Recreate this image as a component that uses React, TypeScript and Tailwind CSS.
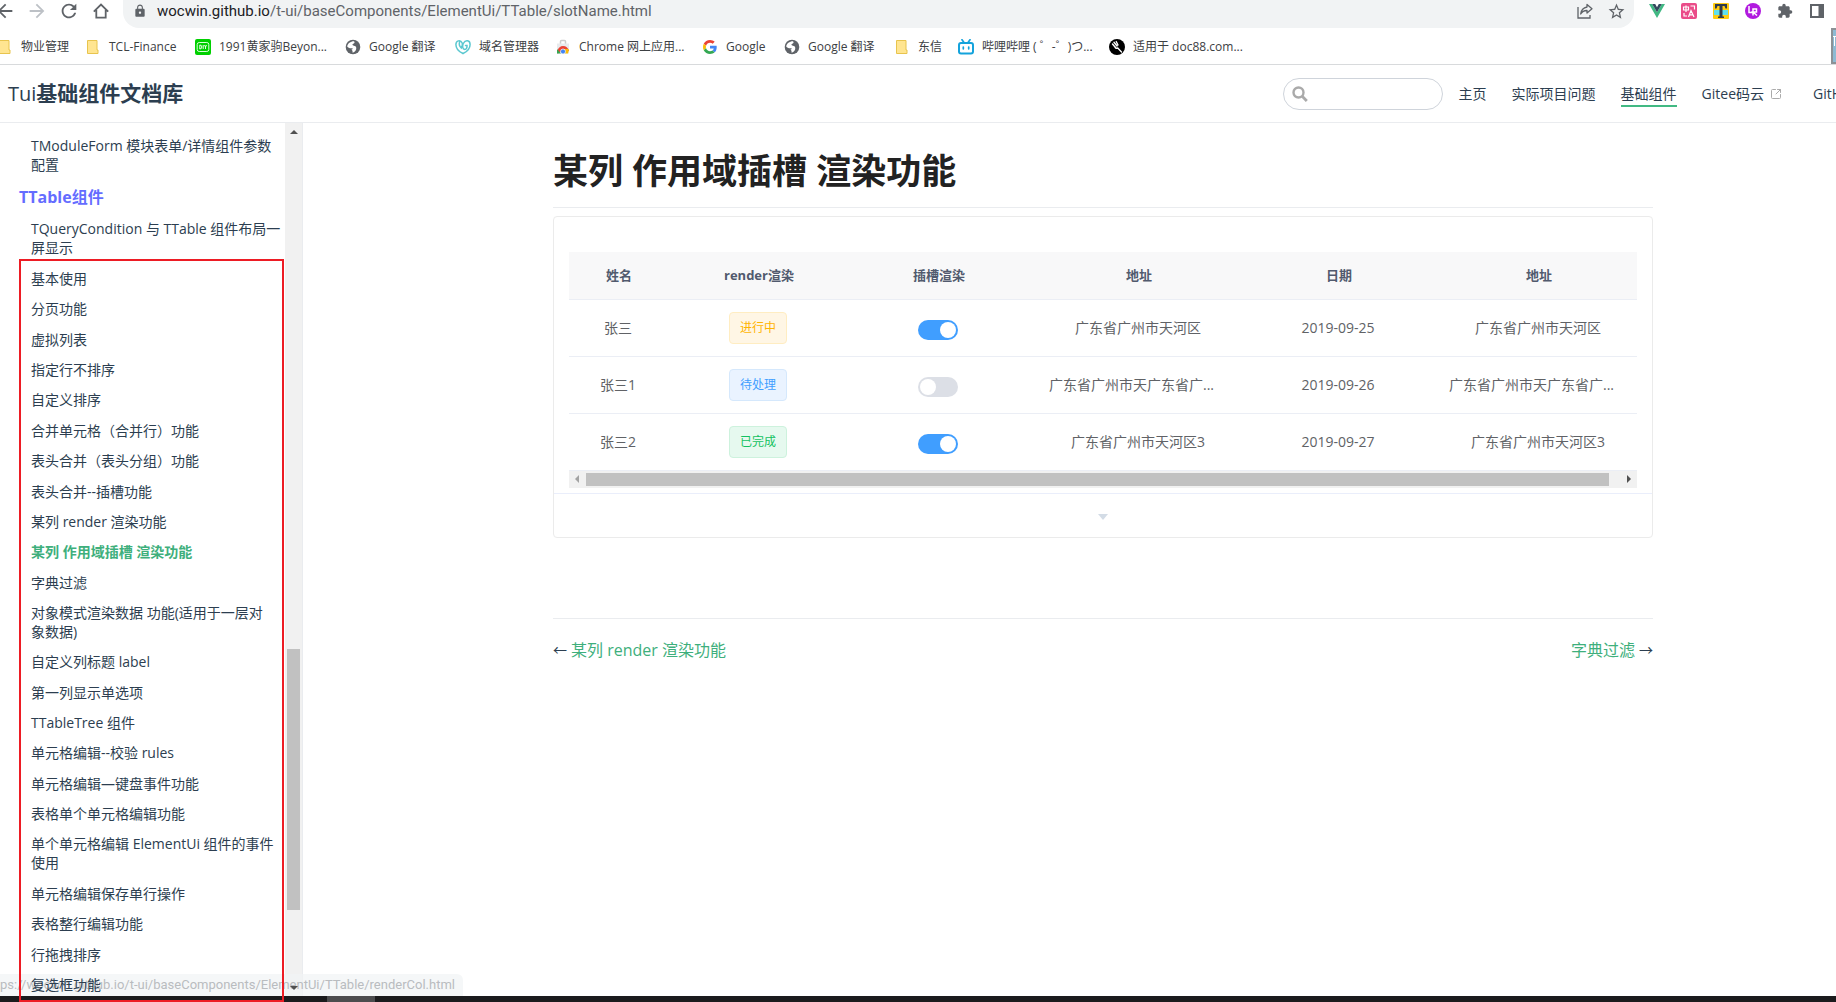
import React from "react";
import { SquareArrowOutUpRight } from "lucide-react";
import { MdArrowBack, MdArrowForward, MdRefresh, MdStarBorder, MdExtension, MdLock } from "react-icons/md";

const Folder = () => (
  <svg viewBox="0 0 16 16" className="h-4 w-4 shrink-0">
    <path d="M2.5 1.5h9.500v9.500h1v3.500h-10.500z" fill="#ffe591" stroke="#e8c44d" />
  </svg>
);
const Globe = () => (
  <svg viewBox="0 0 16 16" className="h-4 w-4 shrink-0">
    <circle cx="8" cy="8" r="7.300" fill="#5f6368" />
    <path d="M9 2.200C10 3 9.600 4.300 8.300 4.700c-1.200.4-1.200 1.400-.1 1.700 2.600.4 3.400 1.400 3 3.600-.5 2.200-2 3.500-3.600 3.700.1-1.500-.2-2.500-1.400-3.200 1.100 0 1.600-.5 1.400-1.300C5.400 9.700 3.200 9 2.200 7.600 2.500 4.500 5.500 2.200 9 2.200z" fill="#fff" />
  </svg>
);
const Movie = () => (
  <svg viewBox="0 0 16 16" className="h-4 w-4 shrink-0">
    <rect width="16" height="16" rx="2" fill="#00d000" />
    <rect x="2.200" y="3.500" width="11.600" height="9" rx="2" fill="none" stroke="#d8ffd8" />
    <path d="M4.800 6v4q2 0 2-2t-2-2M8.200 6v4M9.500 6l1 2 1-2M10.500 8v2" fill="none" stroke="#fff" strokeWidth=".9" />
  </svg>
);
const Domain = () => (
  <svg viewBox="0 0 16 16" className="h-4 w-4 shrink-0" fill="none" stroke="#5cc8d0" strokeWidth="1.500" strokeLinecap="round">
    <path d="M8 14.500C3.500 12.500 .9 9 .9 5.500.9 1.500 5.500.3 7.200 4 7.800 5.800 7.300 7.500 6.300 9 4.600 7.500 3.800 5.500 4.600 3" />
    <path d="M8 14.500c4.500-2 7.100-5.500 7.100-9C15.100 1 10.500.3 8.300 4.500 7 7 7.500 10.500 9.800 10.500c1.700 0 2.400-2 2.200-4h-1.500" />
  </svg>
);
const Store = () => (
  <svg viewBox="0 0 16 16" className="h-4 w-4 shrink-0">
    <path d="M5.500 5V2.500q0-1 1-1h3q1 0 1 1V5" fill="none" stroke="#ccc" strokeWidth="1.500" />
    <path d="M2 4.500h12v10H2z" fill="#e8eaed" />
    <path d="M2.500 14.500a5.500 5.500 0 0 1 0-3Q4 7 8 7q4.500 0 6 5H8z" fill="#ea4335" />
    <path d="M2 10l4 4.500H2z" fill="#34a853" />
    <path d="M8 10h5.500q.5 2-.5 4.500H8z" fill="#fbbc04" />
    <circle cx="8" cy="12.500" r="2.500" fill="#4285f4" stroke="#fff" strokeWidth=".7" />
  </svg>
);
const GoogleG = () => (
  <svg viewBox="0 0 48 48" className="h-4 w-4 shrink-0 p-px">
    <path fill="#EA4335" d="M24 9.500c3.540 0 6.710 1.220 9.210 3.600l6.850-6.850C35.900 2.380 30.470 0 24 0 14.620 0 6.510 5.380 2.560 13.220l7.980 6.190C12.430 13.720 17.740 9.500 24 9.500z" />
    <path fill="#4285F4" d="M46.980 24.550c0-1.570-.15-3.090-.38-4.550H24v9.020h12.940c-.58 2.960-2.260 5.480-4.780 7.180l7.730 6c4.510-4.180 7.090-10.360 7.090-17.650z" />
    <path fill="#FBBC05" d="M10.530 28.590c-.48-1.450-.76-2.990-.76-4.590s.27-3.140.76-4.590l-7.980-6.190C.92 16.460 0 20.120 0 24c0 3.880.92 7.540 2.560 10.780l7.970-6.190z" />
    <path fill="#34A853" d="M24 48c6.480 0 11.930-2.130 15.890-5.810l-7.730-6c-2.150 1.450-4.920 2.300-8.160 2.300-6.260 0-11.570-4.220-13.470-9.910l-7.980 6.190C6.510 42.620 14.620 48 24 48z" />
  </svg>
);
const Bili = () => (
  <svg viewBox="0 0 16 16" className="h-4 w-4 shrink-0" fill="none" stroke="#14a3dc" strokeLinecap="round">
    <rect x="1" y="4" width="14" height="10.500" rx="2" strokeWidth="2" />
    <path d="M4 .8l2 2.700M12 .8l-2 2.700M5.300 8v1.800M10.700 8v1.800" strokeWidth="1.700" />
  </svg>
);
const Doc = () => (
  <svg viewBox="0 0 16 16" className="h-4 w-4 shrink-0">
    <circle cx="8" cy="8" r="8" fill="#000" />
    <path d="M3.500 5l3 3.500M5 3.200l3 3.800M7.200 2.500L9 6M5.800 7.500q.5 2.500 3 1.500l3.700 4" fill="none" stroke="#fff" strokeWidth="1.400" strokeLinecap="round" />
  </svg>
);

const bookmarks = [
  { label: "物业管理", icon: <Folder />, w: "w-[88px]" },
  { label: "TCL-Finance", icon: <Folder />, w: "w-[110px]" },
  { label: "1991黄家驹Beyon...", icon: <Movie />, w: "w-[150px]" },
  { label: "Google 翻译", icon: <Globe />, w: "w-[110px]" },
  { label: "域名管理器", icon: <Domain />, w: "w-[100px]" },
  { label: "Chrome 网上应用...", icon: <Store />, w: "w-[147px]" },
  { label: "Google", icon: <GoogleG />, w: "w-[82px]" },
  { label: "Google 翻译", icon: <Globe />, w: "w-[110px]" },
  { label: "东信", icon: <Folder />, w: "w-[64px]" },
  { label: "哔哩哔哩 ( ゜-゜)つ...", icon: <Bili />, w: "w-[151px]" },
  { label: "适用于 doc88.com...", icon: <Doc />, w: "w-[150px]" },
];

function Browser() {
  return (
    <div className="flex h-[65px] flex-col border-b border-[#d8dadc] text-[#5f6368]">
      <div className="flex h-7 items-start">
        <div className="flex h-[22px] w-[123px] shrink-0 items-center gap-2.5">
          <button aria-label="后退" className="-ml-1.5"><MdArrowBack size={22} /></button>
          <button aria-label="前进" className="text-[#bdc1c6]"><MdArrowForward size={22} /></button>
          <button aria-label="刷新"><MdRefresh size={22} /></button>
          <button aria-label="主页" className="flex w-[22px] justify-center">
            <svg viewBox="0 0 16 16" className="h-4 w-4" fill="none" stroke="#5f6368" strokeWidth="1.800">
              <path d="M.8 8.600L8 1.500l7.200 7.100M3.300 7v7.600h9.400V7" />
            </svg>
          </button>
        </div>
        <div className="flex h-7 min-w-0 flex-1 items-start rounded-b-[16px] bg-[#f1f3f4] pl-2.5 pr-2">
          <div className="flex h-[22px] flex-1 items-center">
            <MdLock size={14} className="mr-2.5" />
            <span className="flex-1 font-['Roboto',sans-serif] text-[15px] leading-[22px]">
              <span className="text-[#202124]">wocwin.github.io</span>/t-ui/baseComponents/ElementUi/TTable/slotName.html
            </span>
            <button aria-label="分享" className="mr-3.5">
              <svg viewBox="0 0 16 16" className="h-4 w-4" fill="none" stroke="#5f6368" strokeWidth="1.300">
                <path d="M1 4v11h12v-3" />
                <path d="M10 1.500L15 5.700 10 10V7.500Q6 7.300 3.700 11 4.500 5 10 4z" strokeLinejoin="round" />
              </svg>
            </button>
            <button aria-label="收藏"><MdStarBorder size={19} /></button>
          </div>
        </div>
        <div className="flex h-[22px] shrink-0 items-center gap-4 pl-[15px] pr-[11px]">
          <svg viewBox="0 0 16 16" className="h-4 w-4">
            <path d="M0 1h3.200L8 9.300 12.800 1H16L8 15z" fill="#41b883" />
            <path d="M3.200 1h3L8 4.200 9.800 1h3L8 9.300z" fill="#34495e" />
          </svg>
          <svg viewBox="0 0 16 16" className="h-4 w-4">
            <rect width="16" height="16" rx="2" fill="#ea4c89" />
            <path d="M2.500 4h5v3h-5zM5 2.500v6.500M9.500 3h4v3.500M7.500 14l2.500-6.500 3 6.500M8.500 11.800h3.500M3 10v3h3" fill="none" stroke="#fff" strokeWidth="1.200" />
          </svg>
          <svg viewBox="0 0 16 16" className="h-4 w-4">
            <rect width="16" height="16" rx="1" fill="#ffcc12" />
            <path d="M1 7h14v5H1z" fill="#5fe0ee" />
            <path d="M2 1h12v4.500h-1.500L11.500 3h-2v10.500h1.500V15H5v-1.500h1.500V3h-2l-1 2.500H2z" fill="#2f3b4c" />
          </svg>
          <svg viewBox="0 0 16 16" className="h-4 w-4">
            <circle cx="8" cy="8" r="8" fill="#b11adf" />
            <path d="M4 3v6.500h4M8 12.500V6h3.500v3H8l4 3.500" fill="none" stroke="#fff" strokeWidth="1.500" />
          </svg>
          <MdExtension size={16} />
          <svg viewBox="0 0 16 16" className="h-4 w-4">
            <path d="M1 1h14v14H1zM3 3v10h6.500V3z" fill="#5f6368" fillRule="evenodd" />
          </svg>
        </div>
      </div>
      <div className="flex flex-1 justify-between">
        <ul className="-ml-[3px] flex items-center pt-0.5 text-xs text-[#3c4043]">
          {bookmarks.map((b, i) => (
            <li key={i} className={b.w}>
              <a href="#" className="flex items-center gap-2 whitespace-nowrap">{b.icon}{b.label}</a>
            </li>
          ))}
        </ul>
        <div className="w-[5px] border-y-2 border-l-2 border-[#8c9196] bg-[#8dbad3]">
          <svg viewBox="0 0 3 10" className="mt-1.5 h-2.5 w-[3px]"><path d="M0 .5h3M1.500 0v10" stroke="#fff" fill="none" /></svg>
        </div>
      </div>
    </div>
  );
}

function Navbar() {
  return (
    <header className="flex h-[58px] items-center overflow-hidden border-b border-[#eaecef] pl-2 text-[#2c3e50]">
      <a href="#" className="whitespace-nowrap text-[21px] font-bold leading-[30px]">
        <span className="text-[20px] font-medium">Tui</span>基础组件文档库
      </a>
      <div className="ml-auto flex items-center">
        <label className="mr-4 flex h-8 w-40 items-center rounded-full border border-[#cfd4db] pl-2">
          <svg viewBox="0 0 16 16" className="h-4 w-4 shrink-0" fill="none" stroke="#aaa">
            <circle cx="6.500" cy="6.500" r="5" strokeWidth="2.400" />
            <path d="M10.200 10.200l4.600 4.800" strokeWidth="2.800" />
          </svg>
          <input type="search" aria-label="搜索" className="w-full min-w-0 bg-transparent px-2 text-sm outline-none" />
        </label>
        <nav className="flex gap-[25px] whitespace-nowrap text-[14px] leading-[22px]">
          <a href="#" className="mt-0.5">主页</a>
          <a href="#" className="mt-0.5">实际项目问题</a>
          <a href="#" className="mt-0.5 border-b-2 border-[#42b983]">基础组件</a>
          <a href="#" className="mt-0.5 flex items-center gap-1.5 self-start pr-1.5">
            Gitee码云 <SquareArrowOutUpRight size={12} className="text-[#aaa]" />
          </a>
          <a href="#" className="mt-0.5 w-[23px] overflow-hidden">GitHub</a>
        </nav>
      </div>
    </header>
  );
}

const items = [
  "基本使用", "分页功能", "虚拟列表", "指定行不排序", "自定义排序", "合并单元格（合并行）功能",
  "表头合并（表头分组）功能", "表头合并--插槽功能", "某列 render 渲染功能", "某列 作用域插槽 渲染功能",
  "字典过滤", "对象模式渲染数据 功能(适用于一层对象数据)", "自定义列标题 label", "第一列显示单选项",
  "TTableTree 组件", "单元格编辑--校验 rules", "单元格编辑—键盘事件功能", "表格单个单元格编辑功能",
  "单个单元格编辑 ElementUi 组件的事件使用", "单元格编辑保存单行操作", "表格整行编辑功能", "行拖拽排序", "复选框功能",
];

function Sidebar() {
  return (
    <aside className="flex w-[303px] shrink-0 border-r border-[#eaecef] text-[14px] leading-[19px] text-[#2c3e50]">
      <div className="flex min-w-0 flex-1 flex-col pl-[19px] pt-2">
        <a href="#" className="pb-1.5 pl-3 pr-2 pt-[5px]">TModuleForm 模块表单/详情组件参数配置</a>
        <p className="h-[34px] text-[16px] font-bold leading-[34px] text-[#646cff]">TTable组件</p>
        <a href="#" className="mb-0.5 pl-3 pt-[5px]">TQueryCondition 与 TTable 组件布局一屏显示</a>
        <ul className="relative z-20 flex flex-1 flex-col justify-between border-2 border-[#ed1c24] pl-2.5 pr-2 pt-[3px]">
          {items.map((t) => (
            <li key={t}>
              <a href="#" className={t === "某列 作用域插槽 渲染功能" ? "block pb-1.5 pt-[5px] font-semibold text-[#3eaf7c]" : "block pb-1.5 pt-[5px]"}>{t}</a>
            </li>
          ))}
        </ul>
      </div>
      <div className="ml-px flex w-[17px] flex-col items-center bg-[#f1f1f1] pb-3 pt-[7px]">
        <svg viewBox="0 0 8 4" className="h-1 w-2"><path d="M0 4l4-4 4 4z" fill="#505050" /></svg>
        <div className="grow-[514]" />
        <div className="w-[13px] grow-[261] bg-[#c1c1c1]" />
        <div className="grow-[76]" />
        <svg viewBox="0 0 8 4" className="relative z-20 h-1 w-2"><path d="M0 0l4 4 4-4z" fill="#505050" /></svg>
      </div>
    </aside>
  );
}

const rows = [
  { name: "张三", tag: "进行中", cls: "border-[#ffedc2] bg-[#fff6e5] text-[#ffb400]", on: true, addr: "广东省广州市天河区", date: "2019-09-25", long: false },
  { name: "张三1", tag: "待处理", cls: "border-[#d5e8fc] bg-[#eaf3ff] text-[#409eff]", on: false, addr: "广东省广州市天广东省广...", date: "2019-09-26", long: true },
  { name: "张三2", tag: "已完成", cls: "border-[#cdf2dd] bg-[#e6f9ef] text-[#13c261]", on: true, addr: "广东省广州市天河区3", date: "2019-09-27", long: false },
];

const Address = ({ text, long }: { text: string; long: boolean }) => (
  <div className={long ? "mx-auto w-[178px] whitespace-nowrap text-left" : "whitespace-nowrap"}>{text}</div>
);

function Main() {
  return (
    <main className="min-w-0 flex-1 pl-[250px] pr-[183px] pt-[23px]">
      <h1 className="border-b border-[#eaecef] pb-3 text-[35px] font-bold leading-[49px] text-[#222]">某列 作用域插槽 渲染功能</h1>
      <section className="mt-2 rounded border border-[#ebebeb]">
        <div className="px-[15px] pb-[5px] pt-[35px]">
          <table className="w-full table-fixed text-center text-[14px] text-[#606266]">
            <colgroup>
              <col className="w-[100px]" /><col className="w-[180px]" /><col className="w-[180px]" />
              <col className="w-[220px]" /><col className="w-[180px]" /><col />
            </colgroup>
            <thead>
              <tr className="h-[47px] border-b border-[#ebeef5] bg-[#f8f8f9] text-[13px] text-[#515a6e]">
                <th>姓名</th><th>render渲染</th><th>插槽渲染</th><th>地址</th><th>日期</th><th className="pl-3">地址</th>
              </tr>
            </thead>
            <tbody>
              {rows.map((r) => (
                <tr key={r.name} className="h-[57px] border-b border-[#ebeef5]">
                  <td className="pr-0.5">{r.name}</td>
                  <td className="pr-0.5"><span className={`inline-block h-8 w-[58px] rounded border text-xs leading-[30px] align-middle ${r.cls}`}>{r.tag}</span></td>
                  <td className="pr-0.5">
                    <label className="mt-1 inline-flex align-middle">
                      <input type="checkbox" role="switch" aria-label={r.name} defaultChecked={r.on} className="peer sr-only" />
                      <span className="flex h-5 w-10 rounded-full bg-[#dcdfe6] p-0.5 peer-checked:justify-end peer-checked:bg-[#409eff]">
                        <span className="h-4 w-4 rounded-full bg-white" />
                      </span>
                    </label>
                  </td>
                  <td className="pr-0.5"><Address text={r.addr} long={r.long} /></td>
                  <td className="pr-0.5">{r.date}</td>
                  <td className="pl-2.5"><Address text={r.addr} long={r.long} /></td>
                </tr>
              ))}
            </tbody>
          </table>
          <div className="flex h-[17px] items-center bg-[#f1f1f1] px-1.5">
            <svg viewBox="0 0 4 8" className="mr-[7px] h-2 w-1"><path d="M4 0v8L0 4z" fill="#a3a3a3" /></svg>
            <div className="h-[13px] flex-1 bg-[#c1c1c1]" />
            <svg viewBox="0 0 4 8" className="ml-[18px] h-2 w-1"><path d="M0 0v8l4-4z" fill="#505050" /></svg>
          </div>
        </div>
        <button aria-label="展开代码" className="flex h-11 w-full items-center justify-center border-t border-[#eaeefb] pt-1">
          <svg viewBox="0 0 10 6" className="h-1.5 w-2.5"><path d="M0 0h10L5 6z" fill="#d3dce6" /></svg>
        </button>
      </section>
      <nav className="mt-20 flex justify-between border-t border-[#eaecef] pt-[19px] text-[16px] leading-6 text-[#2c3e50]">
        <span className="flex gap-1"><span className="text-[14px]">←</span><a href="#" className="text-[#3eaf7c]">某列 <span className="font-medium">render</span> 渲染功能</a></span>
        <span className="flex gap-1"><a href="#" className="text-[#3eaf7c]">字典过滤</a><span className="text-[14px]">→</span></span>
      </nav>
    </main>
  );
}

export default function App() {
  return (
    <div className="relative flex min-h-screen flex-col overflow-hidden bg-white font-['Open_Sans','Noto_Sans_CJK_SC',sans-serif]">
      <Browser />
      <Navbar />
      <div className="flex flex-1">
        <Sidebar />
        <Main />
      </div>
      <div className="absolute bottom-1.5 left-0 z-10 h-[22px] w-[463px] overflow-hidden rounded-tr-md bg-[#f1f3f5]/70 font-['Roboto',sans-serif] text-[13px] leading-[22px] text-[#b9bcbf]">
        <span className="float-right whitespace-nowrap pr-2">https://wocwin.github.io/t-ui/baseComponents/ElementUi/TTable/renderCol.html</span>
      </div>
      <div className="absolute inset-x-0 bottom-0 z-10 flex h-1.5 bg-[#1b1b1d] pl-[327px]">
        <div className="w-12 bg-[#4c4c4e]" />
      </div>
    </div>
  );
}
